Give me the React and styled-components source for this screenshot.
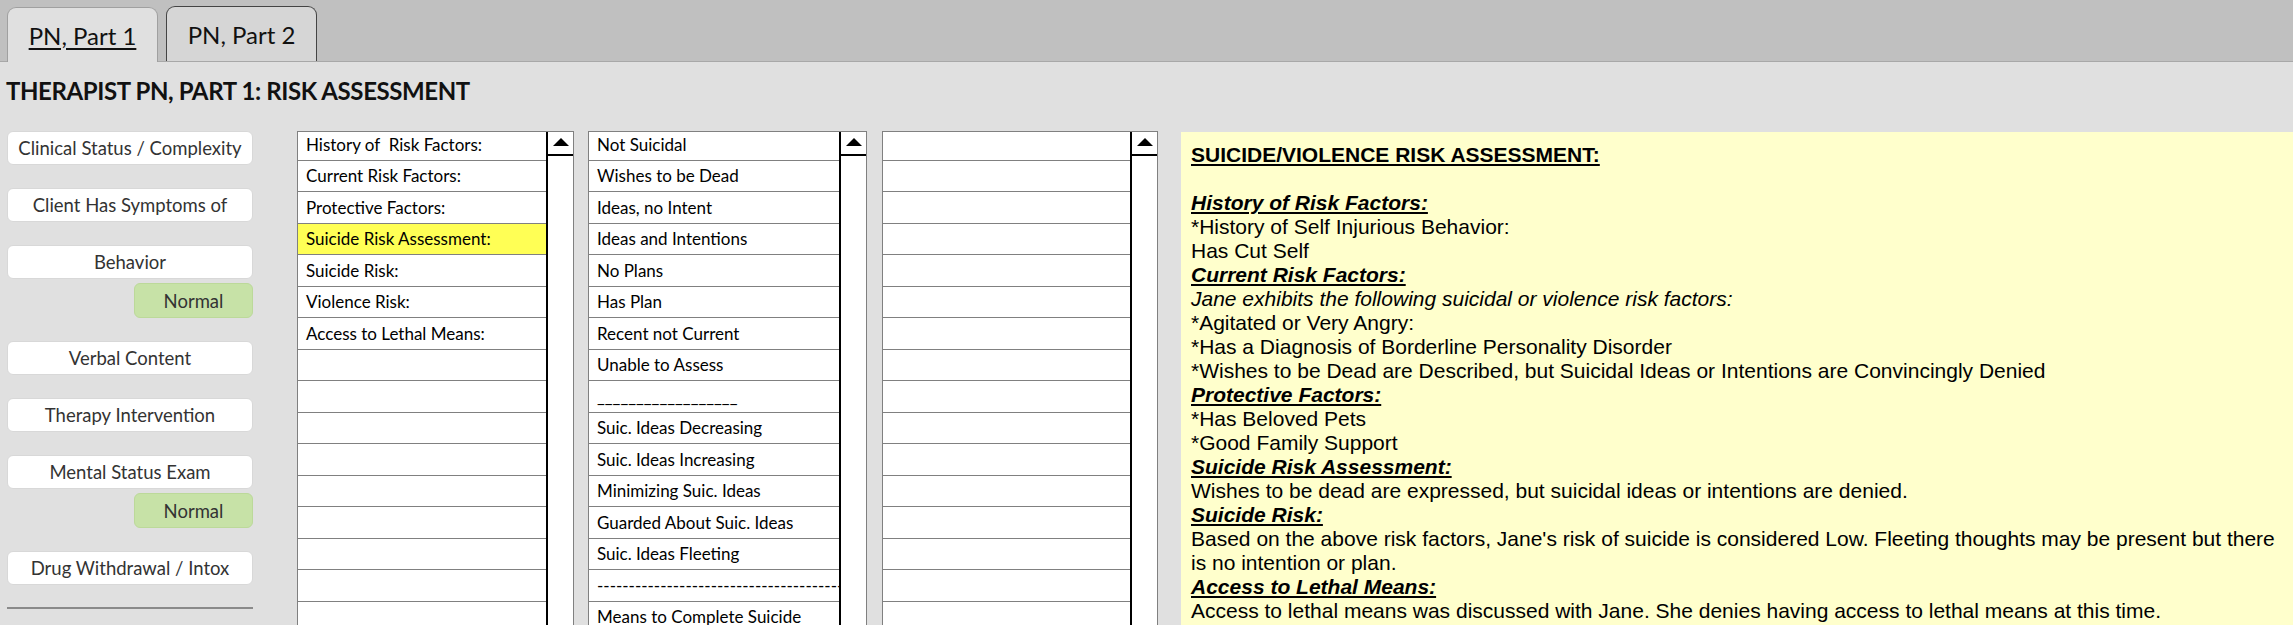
import { Fragment } from "react";
import styled, { createGlobalStyle } from "styled-components";

const GlobalStyle = createGlobalStyle`
  html, body {
    margin: 0;
    padding: 0;
    height: 625px;
    overflow: hidden;
    background: #e0e0e0;
  }
  * { box-sizing: border-box; }
`

const Page = styled.div`
  display: flex;
  flex-direction: column;
  height: 625px;
  font-family: Lato, "Open Sans", sans-serif;
  color: #111;
`

const TabBar = styled.div`
  display: flex;
  align-items: flex-end;
  gap: 8px;
  height: 62px;
  padding-left: 7px;
  background: #c0c0c0;
  border-bottom: 1px solid #a8a8a8;
`

const Tab = styled.div`
  width: 151px;
  height: 55px;
  display: flex;
  align-items: center;
  justify-content: center;
  font-size: 24px;
  border-radius: 9px 9px 0 0;
  border: 1px solid ${({ active }) => (active ? '#a0a0a0' : '#444')};
  border-bottom: none;
  background: ${({ active }) => (active ? '#e0e0e0' : '#d6d6d6')};
  text-decoration: ${({ active }) => (active ? 'underline' : 'none')};
  text-underline-offset: 3px;
  margin-bottom: ${({ active }) => (active ? '-1px' : '0')};
  color: #111;
`

const Heading = styled.h1`
  margin: 0;
  padding: 14px 0 0 6px;
  height: 69px;
  font-size: 24px;
  line-height: 30px;
  font-weight: 700;
  letter-spacing: -0.4px;
  color: #111;
`

const Main = styled.div`
  display: flex;
  align-items: flex-start;
  flex: 1;
  overflow: hidden;
`

const SideColumn = styled.div`
  width: 246px;
  margin-left: 7px;
  display: flex;
  flex-direction: column;
  align-items: flex-end;
`

const SideButton = styled.div`
  width: 100%;
  height: 34px;
  margin-bottom: ${({ tight }) => (tight ? '4px' : '23px')};
  background: #fff;
  border-radius: 6px;
  border: 1px solid #d8d8d8;
  display: flex;
  align-items: center;
  justify-content: center;
  font-size: 18.5px;
  color: #333;
`

const NormalPill = styled.div`
  width: 119px;
  height: 35px;
  margin-bottom: 23px;
  background: #c7e2a7;
  border-radius: 6px;
  border: 1px solid #bcd99a;
  display: flex;
  align-items: center;
  justify-content: center;
  font-size: 18.5px;
  color: #333;
`

const SideRule = styled.div`
  width: 100%;
  height: 0;
  margin-top: -1px;
  border-top: 2px solid #8a8a8a;
`

const ListBox = styled.div`
  width: ${({ w }) => w}px;
  height: 520px;
  margin-left: ${({ gap }) => gap}px;
  display: flex;
  background: #fff;
  border: 1px solid #808080;
  overflow: hidden;
`

const ListRows = styled.div`
  flex: 1;
  overflow: hidden;
  margin-top: -3px;
`

const Row = styled.div`
  height: 31.5px;
  border-bottom: 1px solid #808080;
  padding-left: 8px;
  display: flex;
  align-items: center;
  white-space: pre;
  overflow: hidden;
  font-size: 17px;
  color: #000;
  background: ${({ selected }) => (selected ? '#ffff55' : '#fff')};
`

const ScrollTrack = styled.div`
  width: 27px;
  border-left: 2px solid #000;
  background: #fff;
`

const ScrollUp = styled.div`
  height: 24px;
  border-bottom: 2px solid #000;
  display: flex;
  align-items: center;
  justify-content: center;
  &::before {
    content: "";
    width: 0;
    height: 0;
    border-left: 8px solid transparent;
    border-right: 8px solid transparent;
    border-bottom: 8px solid #000;
    margin-top: -3px;
  }
`

const NotePanel = styled.div`
  flex: 1;
  height: 520px;
  margin-left: 23px;
  margin-top: 1px;
  background: #ffffcc;
  padding: 11px 10px 0 10px;
  font-family: "Liberation Sans", Arial, sans-serif;
  font-size: 21px;
  line-height: 24px;
  color: #000;
`

const NoteTitle = styled.div`
  font-weight: 700;
  text-decoration: underline;
  margin-bottom: 24px;
`

const NoteHead = styled.div`
  font-weight: 700;
  font-style: italic;
  text-decoration: underline;
`

const NoteLine = styled.div`
  font-style: ${({ italic }) => (italic ? 'italic' : 'normal')};
`

const sideItems = [
  { label: 'Clinical Status / Complexity' },
  { label: 'Client Has Symptoms of' },
  { label: 'Behavior', normal: true },
  { label: 'Verbal Content' },
  { label: 'Therapy Intervention' },
  { label: 'Mental Status Exam', normal: true },
  { label: 'Drug Withdrawal / Intox' },
]

const topicRows = [
  'History of  Risk Factors:',
  'Current Risk Factors:',
  'Protective Factors:',
  'Suicide Risk Assessment:',
  'Suicide Risk:',
  'Violence Risk:',
  'Access to Lethal Means:',
]

const optionRows = [
  'Not Suicidal',
  'Wishes to be Dead',
  'Ideas, no Intent',
  'Ideas and Intentions',
  'No Plans',
  'Has Plan',
  'Recent not Current',
  'Unable to Assess',
  '__________________',
  'Suic. Ideas Decreasing',
  'Suic. Ideas Increasing',
  'Minimizing Suic. Ideas',
  'Guarded About Suic. Ideas',
  'Suic. Ideas Fleeting',
  '------------------------------------------',
  'Means to Complete Suicide',
]

const ROW_COUNT = 17

function fill(items) {
  const out = [...items]
  while (out.length < ROW_COUNT) out.push('')
  return out
}

function PickList({ rows, selected, w, gap }) {
  return (
    <ListBox w={w} gap={gap}>
      <ListRows>
        {fill(rows).map((text, i) => (
          <Row key={i} selected={text === selected}>
            {text}
          </Row>
        ))}
      </ListRows>
      <ScrollTrack>
        <ScrollUp />
      </ScrollTrack>
    </ListBox>
  )
}

function App() {
  return (
    <Page>
      <GlobalStyle />
      <TabBar>
        <Tab active>PN, Part 1</Tab>
        <Tab>PN, Part 2</Tab>
      </TabBar>
      <Heading>THERAPIST PN, PART 1: RISK ASSESSMENT</Heading>
      <Main>
        <SideColumn>
          {sideItems.map((item) => (
            <Fragment key={item.label}>
              <SideButton tight={item.normal}>{item.label}</SideButton>
              {item.normal && <NormalPill>Normal</NormalPill>}
            </Fragment>
          ))}
          <SideRule />
        </SideColumn>
        <PickList rows={topicRows} selected="Suicide Risk Assessment:" w={277} gap={44} />
        <PickList rows={optionRows} w={279} gap={14} />
        <PickList rows={[]} w={276} gap={15} />
        <NotePanel>
          <NoteTitle>SUICIDE/VIOLENCE RISK ASSESSMENT:</NoteTitle>
          <NoteHead>History of Risk Factors:</NoteHead>
          <NoteLine>*History of Self Injurious Behavior:</NoteLine>
          <NoteLine>Has Cut Self</NoteLine>
          <NoteHead>Current Risk Factors:</NoteHead>
          <NoteLine italic>Jane exhibits the following suicidal or violence risk factors:</NoteLine>
          <NoteLine>*Agitated or Very Angry:</NoteLine>
          <NoteLine>*Has a Diagnosis of Borderline Personality Disorder</NoteLine>
          <NoteLine>*Wishes to be Dead are Described, but Suicidal Ideas or Intentions are Convincingly Denied</NoteLine>
          <NoteHead>Protective Factors:</NoteHead>
          <NoteLine>*Has Beloved Pets</NoteLine>
          <NoteLine>*Good Family Support</NoteLine>
          <NoteHead>Suicide Risk Assessment:</NoteHead>
          <NoteLine>Wishes to be dead are expressed, but suicidal ideas or intentions are denied.</NoteLine>
          <NoteHead>Suicide Risk:</NoteHead>
          <NoteLine>
            Based on the above risk factors, Jane's risk of suicide is considered Low. Fleeting thoughts may be present but there is no intention or plan.
          </NoteLine>
          <NoteHead>Access to Lethal Means:</NoteHead>
          <NoteLine>Access to lethal means was discussed with Jane. She denies having access to lethal means at this time.</NoteLine>
        </NotePanel>
      </Main>
    </Page>
  )
}

export default App
